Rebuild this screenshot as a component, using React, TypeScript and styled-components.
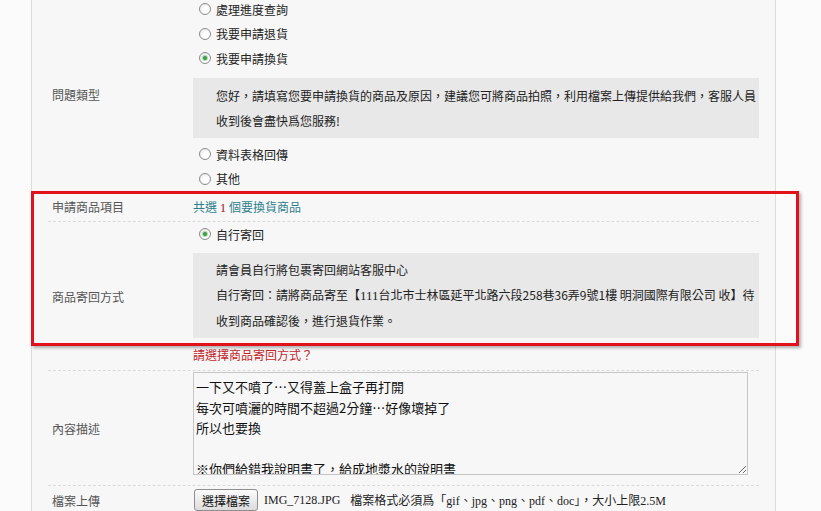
import styled, { createGlobalStyle } from "styled-components";

const GlobalStyle = createGlobalStyle`
  html, body {
    margin: 0;
    padding: 0;
    background: #fbfbfb;
    overflow: hidden;
  }
  body {
    font-family: "Noto Sans CJK TC", "Noto Sans", sans-serif;
    font-size: 12px;
    color: #222;
  }
`;

const options = ["處理進度查詢", "我要申請退貨", "我要申請換貨"];

export default function App() {
  return (
    <>
      <GlobalStyle />
      <Page>
        <Row>
          <Label>問題類型</Label>
          <Cell>
            {options.map((o) => (
              <Choice key={o}>
                <Radio $checked={o === "我要申請換貨"} />
                {o}
              </Choice>
            ))}
            <Notice $top="7.5px">
              <Line>
                您好，請填寫您要申請換貨的商品及原因，建議您可將商品拍照，利用檔案上傳提供給我們，客服人員
              </Line>
              <Line>收到後會盡快爲您服務!</Line>
            </Notice>
            <Choice $top="4px">
              <Radio />
              資料表格回傳
            </Choice>
            <Choice>
              <Radio />
              其他
            </Choice>
          </Cell>
        </Row>

        <Row $height="30px">
          <Label>申請商品項目</Label>
          <Cell>
            <Count>
              共選 <Num>1</Num> 個要換貨商品
            </Count>
          </Cell>
        </Row>

        <Row>
          <Label>商品寄回方式</Label>
          <Cell $pad="0 0 3px">
            <Choice>
              <Radio $checked />
              自行寄回
            </Choice>
            <Notice $top="6.5px" $pad="4px 0 5px 23px">
              <Line>請會員自行將包裹寄回網站客服中心</Line>
              <Line>
                自行寄回：請將商品寄至【<Digits>111</Digits>台北市士林區延平北路六段258巷36弄9號1樓
                明洞國際有限公司 收】待
              </Line>
              <Line>收到商品確認後，進行退貨作業。</Line>
            </Notice>
            <Warn>請選擇商品寄回方式？</Warn>
          </Cell>
        </Row>

        <Row>
          <Label>內容描述</Label>
          <Cell $pad="1px 0 10px">
            <Memo
              defaultValue={
                "一下又不噴了…又得蓋上盒子再打開\n每次可噴灑的時間不超過2分鐘…好像壞掉了\n所以也要換\n\n※你們給錯我說明書了，給成地漿水的說明書"
              }
            />
          </Cell>
        </Row>

        <Row $plain>
          <Label>檔案上傳</Label>
          <FileCell>
            <FileButton>選擇檔案</FileButton>
            <FileName>IMG_7128.JPG</FileName>
            <Hint>檔案格式必須爲「gif、jpg、png、pdf、doc」，大小上限2.5M</Hint>
          </FileCell>
        </Row>

        <Highlight />
      </Page>
    </>
  );
}

const Page = styled.div`
  position: relative;
  margin: -3px 0 0 31px;
  width: 743px;
  min-height: 530px;
  border-left: 1px solid #dcdcdc;
  border-right: 1px solid #dcdcdc;
  background: #f7f7f7;
`;

const Row = styled.div<{ $height?: string; $plain?: boolean }>`
  display: grid;
  grid-template-columns: 145px 566px;
  align-items: center;
  margin: 0 16px;
  min-height: ${(p) => p.$height ?? "auto"};
  border-bottom: ${(p) => (p.$plain ? "none" : "1px dashed #dadada")};
  box-sizing: border-box;
`;

const Label = styled.div`
  padding-left: 4px;
  color: #555;
  font-size: 12px;
`;

const Cell = styled.div<{ $pad?: string }>`
  display: flex;
  flex-direction: column;
  padding: ${(p) => p.$pad ?? "0"};
`;

const Choice = styled.label<{ $top?: string }>`
  display: flex;
  align-items: center;
  gap: 5px;
  height: 24.5px;
  margin-top: ${(p) => p.$top ?? "0"};
  padding-left: 6px;
  color: #222;
`;

const Radio = styled.span<{ $checked?: boolean }>`
  position: relative;
  flex: none;
  width: 12px;
  height: 12px;
  border-radius: 50%;
  border: 1px solid #8c8c8c;
  box-sizing: border-box;
  background: radial-gradient(circle at 60% 60%, #ffffff 35%, #dedede 100%);

  &::after {
    content: "";
    display: ${(p) => (p.$checked ? "block" : "none")};
    position: absolute;
    left: 3px;
    top: 3px;
    width: 4px;
    height: 4px;
    border-radius: 50%;
    background: #3c9a48;
    box-shadow: 0 0 1px 1px #a9d6a9;
  }
`;

const Notice = styled.div<{ $top?: string; $pad?: string }>`
  margin-top: ${(p) => p.$top ?? "0"};
  padding: ${(p) => p.$pad ?? "5px 0 5px 23px"};
  background: #e8e8e8;
  line-height: 25px;
  color: #222;
`;

const Line = styled.div`
  white-space: nowrap;
`;

const Digits = styled.span`
  font-family: "Liberation Serif", serif;
  font-size: 13px;
`;

const Count = styled.div`
  color: #2e7f8c;
  font-size: 12px;
`;

const Num = styled.span`
  color: #a3161c;
  font-family: "Liberation Serif", serif;
  font-size: 13px;
`;

const Warn = styled.div`
  margin-top: 5px;
  height: 24px;
  line-height: 24px;
  color: #c2272d;
`;

const Memo = styled.textarea`
  display: block;
  width: 555px;
  height: 103px;
  box-sizing: border-box;
  margin: 0;
  padding: 4px 2px 2px;
  border: 1px solid #c6c6c6;
  background: #f7f7f7;
  font-family: "Noto Sans CJK TC", sans-serif;
  font-size: 13px;
  line-height: 20.5px;
  color: #111;
  overflow: hidden;
  resize: both;
  outline: none;
`;

const FileCell = styled.div`
  display: flex;
  align-items: center;
  padding: 3px 0 3px;
  font-family: "Liberation Serif", "Noto Sans CJK TC", serif;
  font-size: 12px;
  color: #222;
`;

const FileButton = styled.button`
  height: 22px;
  margin-left: 1px;
  padding: 0 7px;
  border: 1px solid #8e8e8e;
  border-radius: 3px;
  background: linear-gradient(#fbfbfb, #dcdcdc);
  font-family: "Noto Sans CJK TC", sans-serif;
  font-size: 12px;
  color: #111;
`;

const FileName = styled.span`
  margin-left: 6px;
`;

const Hint = styled.span`
  margin-left: 10px;
`;

const Highlight = styled.div`
  position: absolute;
  left: -1px;
  top: 194px;
  width: 768px;
  height: 155px;
  box-sizing: border-box;
  border: 3px solid #e1121c;
  box-shadow: 2px 2px 3px rgba(0, 0, 0, 0.3);
  pointer-events: none;
`;
